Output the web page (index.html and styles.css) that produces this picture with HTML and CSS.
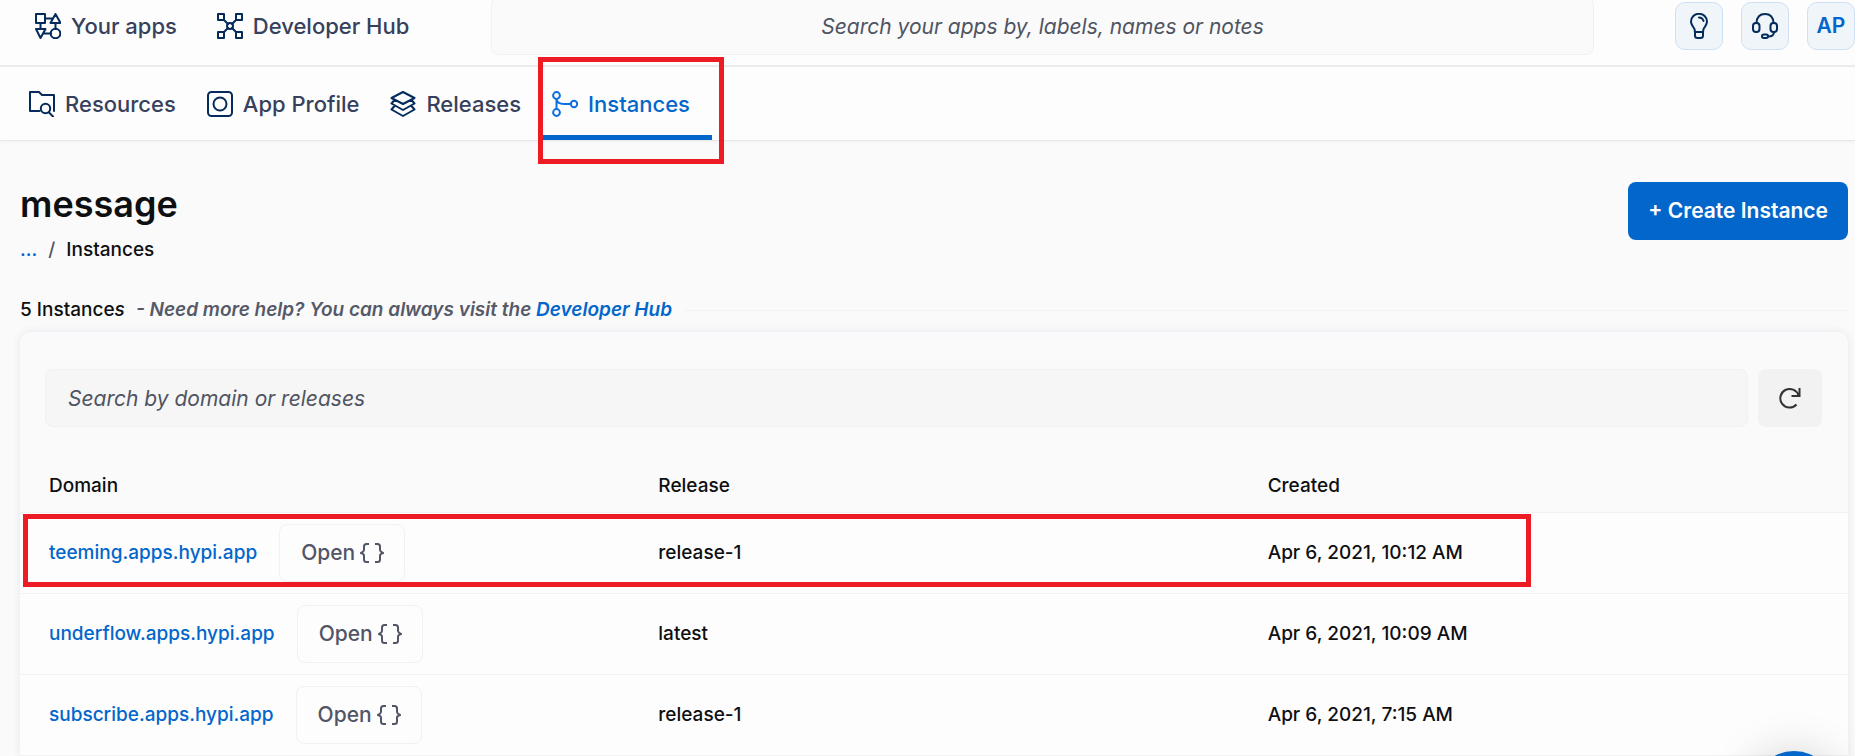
FILE: index.html
```html
<!DOCTYPE html>
<html lang="en">
<head>
<meta charset="utf-8">
<title>Instances</title>
<link rel="stylesheet" href="styles.css">
</head>
<body>
<svg class="sprite" aria-hidden="true">
  <symbol id="braces" viewBox="0 0 24 20"><path d="M9 1H6.500Q4 1 4 3.500V7Q4 8.500 1 10Q4 11 4 12.500V16.500Q4 19 6.500 19H9M15 1H17.500Q20 1 20 3.500V7Q20 8.500 23 10Q20 11 20 12.500V16.500Q20 19 17.500 19H15"/></symbol>
</svg>

<header class="topbar">
  <nav class="top-links" aria-label="Main">
    <a class="link" href="#">
      <svg class="icon" viewBox="0 0 26 26"><path d="M1 1h9v9H1zM10 5.500h7M20.500 1 25.500 10H15.500zM5.500 10v6M1 16h9.500L5.500 25zM8 20.500h8M20.500 10v6"/><circle cx="20.500" cy="20.500" r="4.800"/></svg>
      Your apps
    </a>
    <a class="link" href="#">
      <svg class="icon" viewBox="0 0 26 26"><path d="M1 1h6v6H1zM19 1h6v6h-6zM1 19h6v6H1zM19 19h6v6h-6zM7 7l4 4M19 7l-4 4M7 19l4-4M19 19l-4-4"/><circle cx="13" cy="13" r="3"/></svg>
      Developer Hub
    </a>
  </nav>
  <input class="field top-search" type="text" aria-label="Search your apps" placeholder="Search your apps by, labels, names or notes">
  <div class="top-actions">
    <button class="square" type="button" aria-label="Tips">
      <svg class="icon" viewBox="0 0 26 26"><path d="M9 19 8.500 16Q5 11 5 8.500a8 7.700 0 0 1 16 0Q21 11 17.500 16L17 19zM9 19V22.500Q9 25 11.500 25h3Q17 25 17 22.500V19M13 4.500Q16.500 4.500 17.500 8"/></svg>
    </button>
    <button class="square" type="button" aria-label="Support">
      <svg class="icon" viewBox="0 0 26 26"><rect x="1" y="10" width="6.500" height="9" rx="3"/><rect x="18.500" y="10" width="6.500" height="9" rx="3"/><rect x="10" y="21.500" width="6" height="3.500" rx="1.700"/><path d="M4.500 10Q5 1 13 1t8.500 9M22 19Q22 23.500 16 23.500"/></svg>
    </button>
    <button class="square" type="button">AP</button>
  </div>
</header>

<nav class="tabs" aria-label="App">
  <a class="tab link" href="#">
    <svg class="icon" viewBox="0 0 26 26"><path d="M10.500 20H1V1h9l3 3h12v16M20 21.500 24 25.500"/><circle cx="16.500" cy="17.500" r="4.700"/></svg>
    Resources
  </a>
  <a class="tab link" href="#">
    <svg class="icon" viewBox="0 0 26 26"><rect x="1" y="1" width="24" height="24" rx="3.500"/><circle cx="13" cy="13" r="6.500"/></svg>
    App Profile
  </a>
  <a class="tab link" href="#">
    <svg class="icon" viewBox="0 0 26 26"><path d="M13 1 24.500 7 13 13 1.500 7zM4.500 9 1.500 12.500 13 19 24.500 12.500 21.500 9M4.500 15 1.500 18.500 13 25 24.500 18.500 21.500 15"/></svg>
    Releases
  </a>
  <a class="tab link active" href="#" aria-current="page">
    <svg class="icon" viewBox="0 0 26 26"><circle cx="4.500" cy="4.500" r="3.400"/><circle cx="4.500" cy="21.500" r="3.400"/><circle cx="22" cy="13" r="3.200"/><path d="M4.500 8v10M4.500 8Q5 13 12 13h7"/></svg>
    Instances
    <span class="mark mark-tab"></span>
  </a>
</nav>

<main class="page">
  <div class="heading">
    <div class="titles">
      <h1 class="title">message</h1>
      <div class="crumbs"><a href="#">...</a><span class="slash">/</span><span>Instances</span></div>
    </div>
    <button class="create" type="button">+ Create Instance</button>
  </div>

  <div class="summary">
    <p class="summary-text">5 Instance<i>s</i> <em class="help">- Need more help? You can always visit the <a href="#">Developer Hub</a></em></p>
  </div>

  <section class="card">
    <div class="filter">
      <input class="field" type="text" aria-label="Search by domain or releases" placeholder="Search by domain or releases">
      <button class="refresh" type="button" aria-label="Refresh">
        <svg class="refresh-icon" viewBox="0 0 22 22"><path d="M17.500 17.500A9.300 9.300 0 1 1 19.500 8.500M20.500 1V9H12.500"/></svg>
      </button>
    </div>
    <table class="table">
      <thead>
        <tr><th>Domain</th><th>Release</th><th>Created</th></tr>
      </thead>
      <tbody>
        <tr>
          <td><div class="domain"><a href="#">teeming.apps.hypi.app</a><button class="open" type="button">Open<svg class="braces"><use href="#braces"/></svg></button></div><span class="mark mark-row"></span></td>
          <td>release-1</td><td>Apr 6, 2021, 10:12 AM</td>
        </tr>
        <tr>
          <td><div class="domain"><a href="#">underflow.apps.hypi.app</a><button class="open" type="button">Open<svg class="braces"><use href="#braces"/></svg></button></div></td>
          <td>latest</td><td>Apr 6, 2021, 10:09 AM</td>
        </tr>
        <tr>
          <td><div class="domain"><a href="#">subscribe.apps.hypi.app</a><button class="open" type="button">Open<svg class="braces"><use href="#braces"/></svg></button></div></td>
          <td>release-1</td><td>Apr 6, 2021, 7:15 AM</td>
        </tr>
      </tbody>
    </table>
  </section>
</main>
<button class="chat" type="button" aria-label="Chat"></button>
</body>
</html>
```
FILE: styles.css
```css
* { box-sizing: border-box; }

body {
  margin: 0;
  height: 100vh;
  overflow: hidden;
  display: flex;
  flex-direction: column;
  background: #fafafa;
  color: #0e0f11;
  font: 500 19px/24px Inter, sans-serif;
}

a { color: #0366cb; text-decoration: none; }
button, input { font: inherit; }
.sprite { position: absolute; width: 0; height: 0; }

.icon {
  flex: none;
  width: 26px;
  height: 26px;
  fill: none;
  stroke: #042b5b;
  stroke-width: 2;
  stroke-linejoin: round;
  stroke-linecap: round;
}

.link {
  display: flex;
  align-items: center;
  gap: 10px;
  color: #37415c;
  font-size: 22px;
  white-space: nowrap;
}

.topbar {
  display: flex;
  align-items: center;
  flex: none;
  height: 67px;
  padding: 0 0 13px 35px;
  background: #fdfdfd;
  border-bottom: 2px solid #ececed;
}
.top-links { display: flex; gap: 40px; width: 456px; }

.field {
  flex: 1;
  min-width: 0;
  height: 58px;
  padding: 0 22px;
  border: 1px solid #f1f1f2;
  border-radius: 8px;
  background: #f6f6f6;
  color: #4b4f5c;
  font-size: 21px;
  font-weight: 400;
  font-style: italic;
}
.field::placeholder { color: #4f5462; opacity: 1; }
.top-search { background: #fafafa; text-align: center; }

.top-actions { display: flex; gap: 18px; margin-left: 81px; }
.square {
  display: grid;
  place-items: center;
  width: 48px;
  height: 48px;
  padding: 0;
  border: 1px solid #cfe0f4;
  border-radius: 10px;
  background: #f0f5fa;
  color: #0366cb;
  font-size: 21px;
  font-weight: 600;
}

.tabs {
  display: flex;
  flex: none;
  height: 74px;
  padding-left: 20px;
  background: #fdfdfd;
  border-bottom: 1px solid #e9e9ea;
  box-shadow: 0 1px 3px #0000000a;
}
.tab { position: relative; padding: 0 22px 0 9px; }
.active {
  color: #0366cb;
  box-shadow: inset 0 -5px #0366cb;
}
.active .icon { stroke: #0d6fe0; }

.mark { position: absolute; border: 5px solid #ed1c24; pointer-events: none; }
.mark-tab { inset: -10px -12px -24px -5px; }
.mark-row { inset: 1px 317px 7px 3px; }

.page {
  flex: 1;
  display: flex;
  flex-direction: column;
  padding: 41px 7px 0 20px;
}
.heading { display: flex; justify-content: space-between; align-items: flex-start; }
.title { margin: 0; font-size: 36px; line-height: 44px; font-weight: 600; }
.crumbs { display: flex; gap: 11px; margin-top: 12px; }
.slash { color: #525566; }
.create {
  height: 58px;
  padding: 0 20px;
  border: 0;
  border-radius: 8px;
  background: #0366cb;
  color: #fff;
  font-size: 21px;
  font-weight: 600;
}

.summary { display: flex; align-items: center; gap: 12px; margin: 36px 0 10px; }
.summary::after { content: ""; flex: 1; height: 1px; background: #f3f3f3; }
.summary-text { margin: 0; }
.help { margin-left: 6px; color: #565a68; font-weight: 600; }

.card {
  flex: 1;
  border-radius: 10px 10px 0 0;
  box-shadow: 0 0 8px #2838701a;
  background: #fafafa;
}
.filter { display: flex; gap: 10px; padding: 37px 26px 32px 25px; }
.refresh {
  display: grid;
  place-items: center;
  width: 64px;
  border: 0;
  border-radius: 8px;
  background: #f2f2f2;
}
.refresh-icon { width: 22px; height: 22px; fill: none; stroke: #333336; stroke-width: 2; }

.table { width: 100%; border-collapse: separate; border-spacing: 0; table-layout: fixed; }
th, td { height: 81px; padding: 0 0 0 29px; border-bottom: 1px solid #f1f1f2; text-align: left; }
th { height: 54px; font-weight: 500; }
tbody tr { position: relative; background: #fdfdfd; }
.domain { display: flex; align-items: center; gap: 22px; }
.open {
  display: flex;
  align-items: center;
  gap: 5px;
  height: 58px;
  padding: 0 20px 0 21px;
  border: 1px solid #f1f1f2;
  border-radius: 8px;
  background: #fdfdfd;
  color: #525566;
  font-size: 21px;
  font-weight: 500;
}
.braces { width: 24px; height: 20px; fill: none; stroke: #525566; stroke-width: 2; }

.chat {
  position: fixed;
  right: 19px;
  bottom: -79px;
  width: 84px;
  height: 84px;
  border: 0;
  border-radius: 50%;
  background: #0366cb;
  box-shadow: 0 4px 48px #00000033;
}
```
